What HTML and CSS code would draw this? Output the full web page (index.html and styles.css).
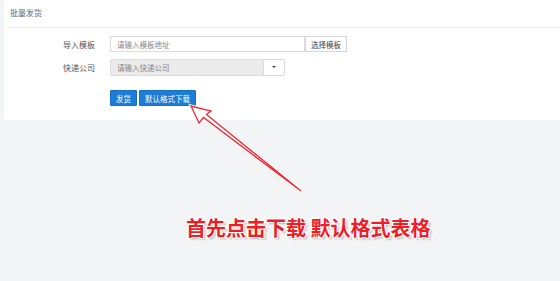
FILE: index.html
```html
<!DOCTYPE html>
<html lang="zh-CN">
<head>
  <meta charset="UTF-8" />
  <title>批量发货</title>
  <link rel="stylesheet" href="styles.css">
</head>
<body>

  <div class="panel">
    <div class="panel-title">批量发货</div>

    <div class="form">
      <div class="form-row">
        <label class="form-label">导入模板</label>
        <input class="text-input" type="text" placeholder="请输入模板地址" />
        <button class="btn-default">选择模板</button>
      </div>

      <div class="form-row">
        <label class="form-label">快递公司</label>
        <div class="select">
          <span class="select-text">请输入快递公司</span>
          <span class="select-caret"></span>
        </div>
      </div>

      <div class="form-actions">
        <button class="btn-primary">发货</button>
        <button class="btn-primary">默认格式下载</button>
      </div>
    </div>
  </div>

  <!-- annotation -->
  <svg class="arrow" width="560" height="281" viewBox="0 0 560 281">
    <polygon points="191,106 199,123 203.5,117.5 301,191 206.5,114.5 211,111"
      fill="none" stroke="#fff" stroke-width="3" stroke-linejoin="miter" />
    <polygon points="191,106 199,123 203.5,117.5 301,191 206.5,114.5 211,111"
      fill="none" stroke="#ee2a33" stroke-width="1.3" stroke-linejoin="miter" />
  </svg>

  <div class="note">首先点击下载 默认格式表格</div>

</body>
</html>
```

FILE: styles.css
```css
body {
  margin: 0;
  height: 281px;
  overflow: hidden;
  background: #f3f4f6;
  font-family: "Noto Sans CJK SC", "Liberation Sans", sans-serif;
  position: relative;
}

.panel {
  margin-left: 4px;
  height: 120px;
  background: #fff;
}

.panel-title {
  margin: 0 0 0 6px;
  height: 27px;
  line-height: 26px;
  font-size: 8px;
  color: #666;
  border-bottom: 1px solid #eeeeee;
}

.form {
  padding-top: 8px;
}

.form-row {
  display: flex;
  align-items: center;
  height: 16px;
  margin-bottom: 7px;
}

.form-label {
  width: 91px;
  margin-right: 15px;
  text-align: right;
  font-size: 8px;
  color: #555;
}

.text-input {
  box-sizing: border-box;
  width: 195px;
  height: 16px;
  margin: 0;
  padding: 0 6px;
  border: 1px solid #dcdcdc;
  font-size: 7.5px;
  font-family: inherit;
  outline: none;
}

.text-input::placeholder {
  color: #888;
}

.btn-default {
  box-sizing: border-box;
  height: 16px;
  margin: 0;
  padding: 0 5px;
  border: 1px solid #d6d6d6;
  background: #fff;
  font-size: 7.5px;
  font-family: inherit;
  color: #444;
}

.select {
  box-sizing: border-box;
  display: flex;
  width: 175px;
  height: 17px;
  border: 1px solid #dcdcdc;
  border-radius: 2px;
  background: #ebebeb;
}

.select-text {
  flex: 1;
  padding-left: 6px;
  line-height: 15px;
  font-size: 7.5px;
  color: #888;
}

.select-caret {
  width: 20px;
  background: #fff;
  border-left: 1px solid #dcdcdc;
  position: relative;
}

.select-caret::after {
  content: "";
  position: absolute;
  left: 8px;
  top: 6px;
  border-left: 2px solid transparent;
  border-right: 2px solid transparent;
  border-top: 2.5px solid #444;
}

.form-actions {
  display: flex;
  gap: 2px;
  margin-top: 15px;
  padding-left: 106px;
}

.btn-primary {
  box-sizing: border-box;
  height: 16px;
  margin: 0;
  padding: 0 5px;
  border: 1px solid #1671c4;
  border-radius: 1px;
  background: #1c7cd6;
  color: #fff;
  font-size: 7.5px;
  font-family: inherit;
}

.arrow {
  position: absolute;
  left: 0;
  top: 0;
}

.note {
  position: absolute;
  left: 186px;
  top: 213px;
  font-size: 20px;
  font-weight: bold;
  color: #ee1d27;
  white-space: nowrap;
  text-shadow:
    -1px -1px 0 #fff, 1px -1px 0 #fff, -1px 1px 0 #fff, 1px 1px 0 #fff,
    2px 2px 2px rgba(0, 0, 0, 0.25);
}
```
